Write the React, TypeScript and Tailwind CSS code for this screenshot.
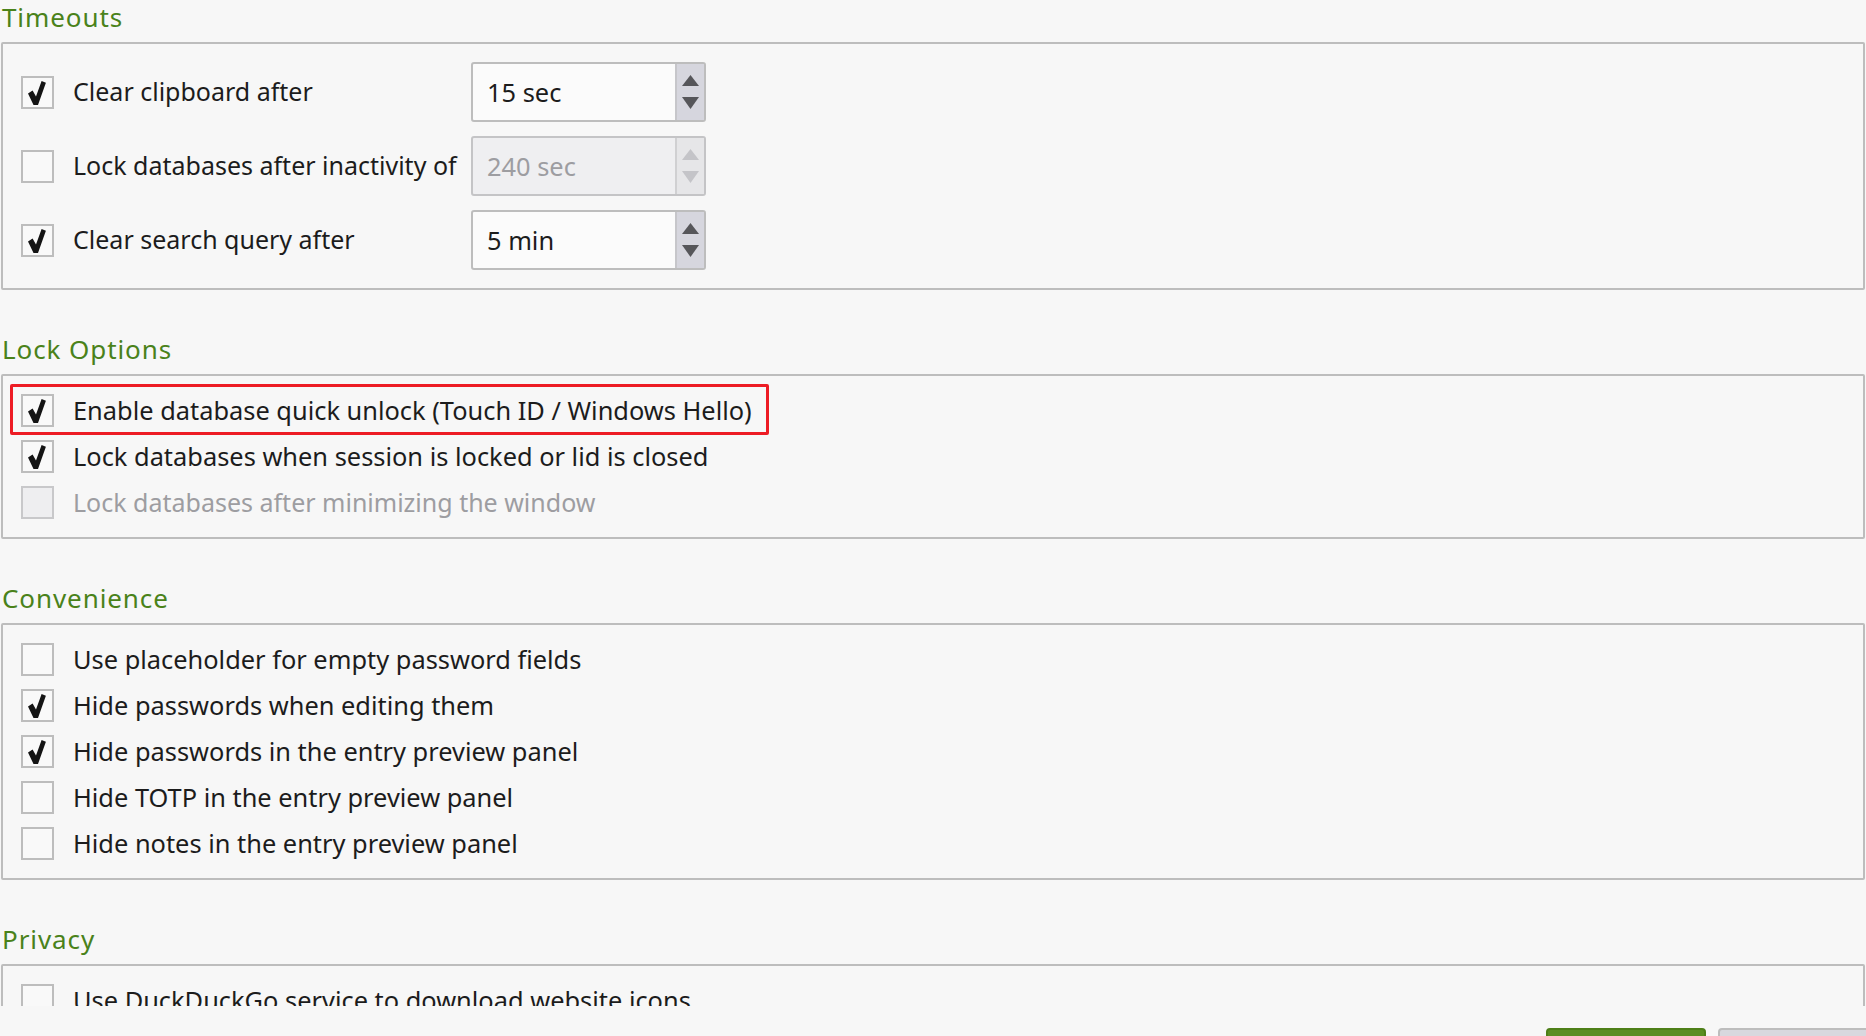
import React from "react";

interface RowProps {
  label: string;
  checked?: boolean;
  disabled?: boolean;
}

const CheckMark: React.FC<{ disabled?: boolean }> = ({ disabled }) => (
  <svg
    viewBox="0 0 18 24"
    className="absolute left-[5px] top-[3px] w-[18px] h-[24px]"
  >
    <path
      d="M0 12.6 L4.6 9.6 L8 15.4 L13.6 0 L17.9 1.7 L10 24 L5.5 24 Z"
      fill={disabled ? "#a0a0a4" : "#141414"}
    />
  </svg>
);

const CheckBox: React.FC<{ checked?: boolean; disabled?: boolean }> = ({
  checked,
  disabled,
}) => (
  <div
    className={
      disabled
        ? "relative w-[33px] h-[33px] shrink-0 border-2 border-[#c8c8ca] bg-[#eeeef0]"
        : "relative w-[33px] h-[33px] shrink-0 border-2 border-[#bdbdbd] bg-[#f9f9f9]"
    }
  >
    {checked && <CheckMark disabled={disabled} />}
  </div>
);

const CheckRow: React.FC<RowProps> = ({ label, checked, disabled }) => (
  <div className="flex items-center h-[33px] pl-[18px]">
    <CheckBox checked={checked} disabled={disabled} />
    <span
      className={
        disabled
          ? "ml-[19px] text-[25px] leading-[33px] text-[#9d9da1] whitespace-nowrap"
          : "ml-[19px] text-[25.4px] leading-[33px] text-[#1c1c1c] whitespace-nowrap"
      }
    >
      {label}
    </span>
  </div>
);

const SpinBox: React.FC<{ value: string; disabled?: boolean }> = ({
  value,
  disabled,
}) => (
  <div
    className={
      disabled
        ? "w-[235px] h-[60px] flex border-2 border-[#c4c4c6] rounded-[3px] bg-[#efeff1]"
        : "w-[235px] h-[60px] flex border-2 border-[#bdbdbd] rounded-[3px] bg-[#fbfbfb]"
    }
  >
    <div
      className={
        disabled
          ? "flex-1 flex items-center pl-[14px] text-[25.4px] text-[#9d9da1]"
          : "flex-1 flex items-center pl-[14px] text-[25.4px] text-[#1c1c1c]"
      }
    >
      {value}
    </div>
    <div
      className={
        disabled
          ? "w-[29px] flex flex-col items-center justify-center gap-[11px] bg-[#e6e6e8] border-l-2 border-[#d0d0d2]"
          : "w-[29px] flex flex-col items-center justify-center gap-[11px] bg-[#d6d6de] border-l-2 border-[#c6c6ca]"
      }
    >
      <svg viewBox="0 0 17 11" className="w-[17px] h-[11px]">
        <polygon
          points="0,11 8.5,0 17,11"
          fill={disabled ? "#c4c4c8" : "#56565a"}
        />
      </svg>
      <svg viewBox="0 0 17 12" className="w-[17px] h-[12px]">
        <polygon
          points="0,0 17,0 8.5,12"
          fill={disabled ? "#c4c4c8" : "#56565a"}
        />
      </svg>
    </div>
  </div>
);

const TimeoutRow: React.FC<{
  label: string;
  value: string;
  checked?: boolean;
  disabled?: boolean;
}> = ({ label, value, checked, disabled }) => (
  <div className="flex items-center h-[60px] pl-[18px]">
    <CheckBox checked={checked} />
    <span className="ml-[19px] w-[398px] text-[25px] text-[#1c1c1c] whitespace-nowrap">
      {label}
    </span>
    <SpinBox value={value} disabled={disabled} />
  </div>
);

const Section: React.FC<{
  title: string;
  gap: string;
  children: React.ReactNode;
}> = ({ title, gap, children }) => (
  <div className="mb-[42px]">
    <div className="h-[42px] pl-[1px] text-[26px] leading-[35px] tracking-[0.035em] text-[#4a821a]">
      {title}
    </div>
    <div
      className={`w-[1864px] border-2 border-[#bdbdbd] rounded-[2px] py-[18px] flex flex-col ${gap}`}
    >
      {children}
    </div>
  </div>
);

const App: React.FC = () => {
  return (
    <div className="w-[1866px] h-[1036px] overflow-hidden bg-[#f7f7f7] font-['Noto_Sans',sans-serif]">
      <div className="h-[1006px] overflow-hidden pl-[1px]">
        <Section title="Timeouts" gap="gap-[14px]">
          <TimeoutRow label="Clear clipboard after" value="15 sec" checked />
          <TimeoutRow
            label="Lock databases after inactivity of"
            value="240 sec"
            disabled
          />
          <TimeoutRow label="Clear search query after" value="5 min" checked />
        </Section>

        <Section title="Lock Options" gap="gap-[13px]">
          <div className="relative">
            <div className="absolute left-[7px] -top-[10px] w-[759px] h-[51px] border-[3px] border-[#ed1c24] rounded-[2px]" />
            <CheckRow
              label="Enable database quick unlock (Touch ID / Windows Hello)"
              checked
            />
          </div>
          <CheckRow
            label="Lock databases when session is locked or lid is closed"
            checked
          />
          <CheckRow label="Lock databases after minimizing the window" disabled />
        </Section>

        <Section title="Convenience" gap="gap-[13px]">
          <CheckRow label="Use placeholder for empty password fields" />
          <CheckRow label="Hide passwords when editing them" checked />
          <CheckRow label="Hide passwords in the entry preview panel" checked />
          <CheckRow label="Hide TOTP in the entry preview panel" />
          <CheckRow label="Hide notes in the entry preview panel" />
        </Section>

        <Section title="Privacy" gap="gap-[13px]">
          <div className="h-[80px]">
            <CheckRow label="Use DuckDuckGo service to download website icons" />
          </div>
        </Section>
      </div>

      <div className="h-[30px] flex justify-end items-start pt-[22px] gap-[12px] -mr-[12px]">
        <div className="w-[160px] h-[40px] shrink-0 rounded-[4px] border-2 border-[#4d7f18] bg-[#5a8e22]" />
        <div className="w-[160px] h-[40px] shrink-0 rounded-[4px] border-2 border-[#bdbdbd] bg-[#d8d8de]" />
      </div>
    </div>
  );
};

export default App;
